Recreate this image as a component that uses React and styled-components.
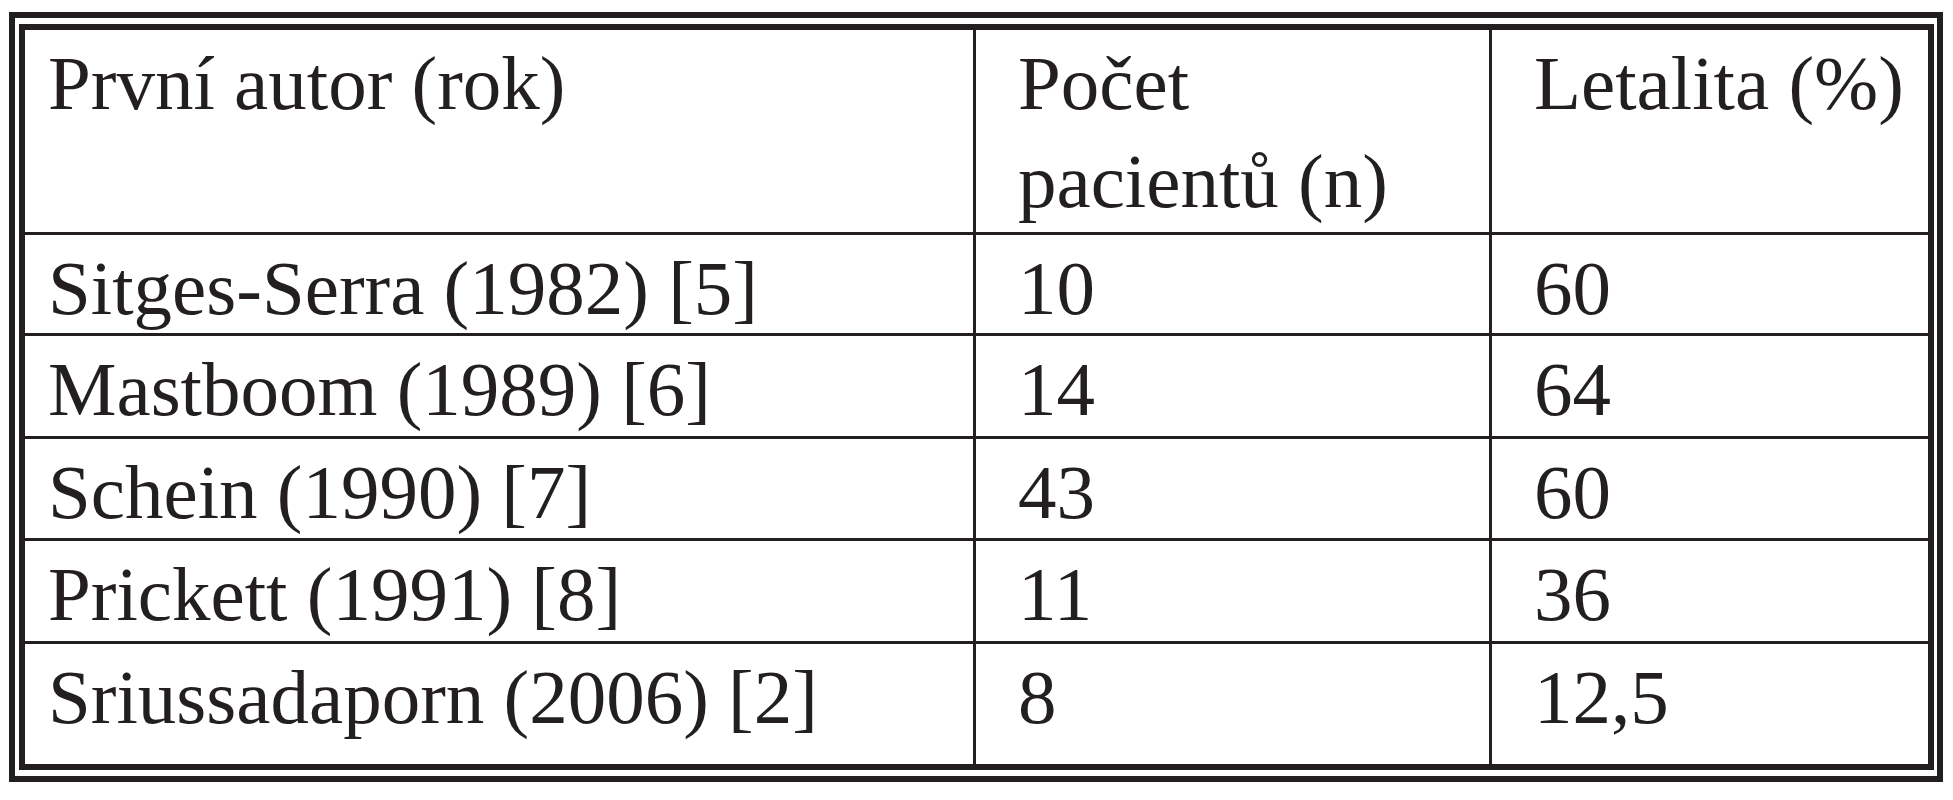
import React from "react";
import styled, { createGlobalStyle } from "styled-components";

const Global = createGlobalStyle`
  html, body { margin: 0; padding: 0; background: #ffffff; }
  body { font-family: "Liberation Serif", "Times New Roman", serif; }
`;

const Page = styled.div`
  padding: 12px 0 0 9px;
`;

const Frame = styled.div`
  width: 1934px;
  box-sizing: border-box;
  border: 6px solid #231f20;
  padding: 6px 3px 6px 4px;
`;

const Grid = styled.div`
  display: grid;
  grid-template-columns: 948px 513px 436px;
  grid-template-rows: 202px 98px 100px 99px 100px 120px;
  gap: 3px;
  background: #231f20;
  border: 6px solid #231f20;
`;

const Cell = styled.div`
  background: #ffffff;
  color: #231f20;
  font-family: "Liberation Serif", "Times New Roman", serif;
  font-size: 77px;
  line-height: 98px;
  padding: 4px 0 0 ${(p) => (p.$first ? "23px" : "42px")};
  white-space: nowrap;
`;

const rows = [
  ["Sitges-Serra (1982) [5]", "10", "60"],
  ["Mastboom (1989) [6]", "14", "64"],
  ["Schein (1990) [7]", "43", "60"],
  ["Prickett (1991) [8]", "11", "36"],
  ["Sriussadaporn (2006) [2]", "8", "12,5"],
];

export default function App() {
  return (
    <>
      <Global />
      <Page>
        <Frame>
          <Grid>
            <Cell $first>První autor (rok)</Cell>
            <Cell>
              Počet
              <br />
              pacientů (n)
            </Cell>
            <Cell>Letalita (%)</Cell>
            {rows.map((r) => (
              <React.Fragment key={r[0]}>
                <Cell $first>{r[0]}</Cell>
                <Cell>{r[1]}</Cell>
                <Cell>{r[2]}</Cell>
              </React.Fragment>
            ))}
          </Grid>
        </Frame>
      </Page>
    </>
  );
}
